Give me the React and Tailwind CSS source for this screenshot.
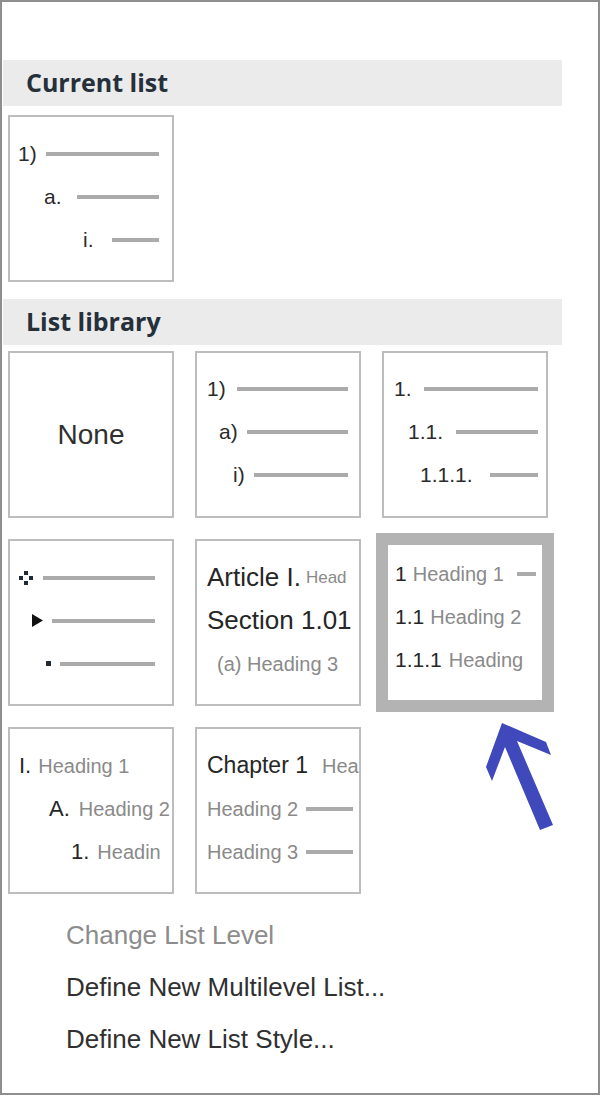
// Multilevel list gallery
// Word-style "Current list" / "List library" dropdown

const sans = { fontFamily: '"Liberation Sans", Arial, sans-serif' };

function Line({ className = '' }) {
  return <div className={`flex-1 h-[4px] bg-[#ababab] ${className}`} />;
}

function Box({ children, className = '' }) {
  return (
    <div
      className={`w-[166px] h-[167px] border-2 border-[#bdbdbd] bg-white overflow-hidden ${className}`}
    >
      {children}
    </div>
  );
}

function Band({ children }) {
  return (
    <div
      className="ml-[1px] w-[559px] h-[46px] bg-[#ebebeb] flex items-center pl-[23px] text-[25px] font-bold text-[#25303a]"
      style={{ fontFamily: '"Open Sans", "Noto Sans", sans-serif' }}
    >
      {children}
    </div>
  );
}

function Diamond() {
  return (
    <svg width="14" height="14" viewBox="0 0 14 14">
      <rect x="5" y="0" width="4" height="4" fill="#1f2a33" />
      <rect x="0" y="5" width="4" height="4" fill="#1f2a33" />
      <rect x="10" y="5" width="4" height="4" fill="#1f2a33" />
      <rect x="5" y="10" width="4" height="4" fill="#1f2a33" />
    </svg>
  );
}

function Triangle() {
  return (
    <svg width="11" height="13" viewBox="0 0 11 13">
      <polygon points="0,0 11,6.5 0,13" fill="#111" />
    </svg>
  );
}

function Square() {
  return <div className="w-[5px] h-[5px] bg-[#1f2a33]" />;
}

function App() {
  return (
    <div
      className="relative w-[600px] h-[1095px] border-2 border-[#8e8e8e] bg-white text-[#2b2b2b] overflow-hidden"
      style={sans}
    >
      {/* Current list */}
      <div className="mt-[58px]">
        <Band>Current list</Band>
      </div>

      <div className="mt-[9px] ml-[6px]">
        <Box className="pt-[15px] pr-[13px] text-[21px]">
          <div className="flex items-center h-[43px] pl-[8px]">
            <span className="w-[28px]">1)</span>
            <Line />
          </div>
          <div className="flex items-center h-[43px] pl-[34px]">
            <span className="w-[33px]">a.</span>
            <Line />
          </div>
          <div className="flex items-center h-[43px] pl-[73px]">
            <span className="w-[29px]">i.</span>
            <Line />
          </div>
        </Box>
      </div>

      {/* List library */}
      <div className="mt-[17px]">
        <Band>List library</Band>
      </div>

      <div className="mt-[6px] ml-[6px] grid grid-cols-[166px_166px_166px] gap-x-[21px] gap-y-[21px]">
        {/* None */}
        <Box className="flex items-center justify-center text-[28px] text-[#303030]">
          None
        </Box>

        {/* 1) a) i) */}
        <Box className="pt-[14px] pr-[11px] text-[21px]">
          <div className="flex items-center h-[43px] pl-[10px]">
            <span className="w-[30px]">1)</span>
            <Line />
          </div>
          <div className="flex items-center h-[43px] pl-[22px]">
            <span className="w-[28px]">a)</span>
            <Line />
          </div>
          <div className="flex items-center h-[43px] pl-[36px]">
            <span className="w-[21px]">i)</span>
            <Line />
          </div>
        </Box>

        {/* 1. 1.1. 1.1.1. */}
        <Box className="pt-[14px] pr-[8px] text-[21px]">
          <div className="flex items-center h-[43px] pl-[10px]">
            <span className="w-[30px]">1.</span>
            <Line />
          </div>
          <div className="flex items-center h-[43px] pl-[24px]">
            <span className="w-[48px]">1.1.</span>
            <Line />
          </div>
          <div className="flex items-center h-[43px] pl-[36px]">
            <span className="w-[70px]">1.1.1.</span>
            <Line />
          </div>
        </Box>

        {/* Bullets */}
        <Box className="pt-[15px] pr-[17px]">
          <div className="flex items-center h-[43px] pl-[9px]">
            <span className="w-[24px] flex"><Diamond /></span>
            <Line />
          </div>
          <div className="flex items-center h-[43px] pl-[22px]">
            <span className="w-[20px] flex"><Triangle /></span>
            <Line />
          </div>
          <div className="flex items-center h-[43px] pl-[36px]">
            <span className="w-[14px] flex"><Square /></span>
            <Line />
          </div>
        </Box>

        {/* Article / Section */}
        <Box className="pt-[15px] whitespace-nowrap">
          <div className="flex items-center h-[43px] pl-[10px]">
            <span className="text-[26px] text-[#262626]">Article I.</span>
            <span className="ml-[5px] text-[17px] text-[#8a8a8a]">Head</span>
          </div>
          <div className="flex items-center h-[43px] pl-[10px]">
            <span className="text-[26px] text-[#262626]">Section 1.01</span>
          </div>
          <div className="flex items-center h-[43px] pl-[20px] text-[20px] text-[#8a8a8a]">
            (a) Heading 3
          </div>
        </Box>

        {/* Selected: 1 Heading 1 */}
        <div className="-m-[6px] w-[178px] h-[179px] border-[12px] border-[#b3b3b3] bg-white overflow-hidden whitespace-nowrap pt-[7px] pr-[6px]">
          <div className="flex items-center h-[43px] pl-[7px]">
            <span className="text-[21px] text-[#262626]">1</span>
            <span className="ml-[6px] text-[20px] text-[#8a8a8a]">Heading 1</span>
            <div className="ml-[13px] w-[19px] h-[4px] bg-[#ababab]" />
          </div>
          <div className="flex items-center h-[43px] pl-[7px]">
            <span className="text-[21px] text-[#262626]">1.1</span>
            <span className="ml-[6px] text-[20px] text-[#8a8a8a]">Heading 2</span>
          </div>
          <div className="flex items-center h-[43px] pl-[7px]">
            <span className="text-[21px] text-[#262626]">1.1.1</span>
            <span className="ml-[7px] text-[20px] text-[#8a8a8a]">Heading</span>
          </div>
        </div>

        {/* I. A. 1. */}
        <Box className="pt-[15px] whitespace-nowrap">
          <div className="flex items-center h-[43px] pl-[9px]">
            <span className="text-[22px] text-[#262626]">I.</span>
            <span className="ml-[7px] text-[20px] text-[#8a8a8a]">Heading 1</span>
          </div>
          <div className="flex items-center h-[43px] pl-[39px]">
            <span className="text-[22px] text-[#262626]">A.</span>
            <span className="ml-[9px] text-[20px] text-[#8a8a8a]">Heading 2</span>
          </div>
          <div className="flex items-center h-[43px] pl-[61px]">
            <span className="text-[22px] text-[#262626]">1.</span>
            <span className="ml-[8px] text-[20px] text-[#8a8a8a]">Headin</span>
          </div>
        </Box>

        {/* Chapter */}
        <Box className="pt-[15px] pr-[6px] whitespace-nowrap">
          <div className="flex items-center h-[43px] pl-[10px]">
            <span className="text-[23px] text-[#262626]">Chapter 1</span>
            <span className="ml-[14px] text-[20px] text-[#8a8a8a]">Hea</span>
          </div>
          <div className="flex items-center h-[43px] pl-[10px]">
            <span className="text-[20px] text-[#8a8a8a] mr-[8px]">Heading 2</span>
            <Line />
          </div>
          <div className="flex items-center h-[43px] pl-[10px]">
            <span className="text-[20px] text-[#8a8a8a] mr-[8px]">Heading 3</span>
            <Line />
          </div>
        </Box>
      </div>

      {/* Menu commands */}
      <div className="mt-[15px] pl-[64px] text-[26px]">
        <div className="h-[52px] flex items-center text-[#8c8c8c]">Change List Level</div>
        <div className="h-[52px] flex items-center text-[#303030]">Define New Multilevel List...</div>
        <div className="h-[52px] flex items-center text-[#303030]">Define New List Style...</div>
      </div>

      {/* Callout arrow */}
      <svg
        className="absolute left-[478px] top-[716px]"
        width="80"
        height="120"
        viewBox="0 0 80 120"
      >
        <polygon
          points="22,5 66,24 71,37 37,23 73,107 60,112 25,29 12,63 6,49"
          fill="#4049bb"
        />
      </svg>
    </div>
  );
}

export default App;
